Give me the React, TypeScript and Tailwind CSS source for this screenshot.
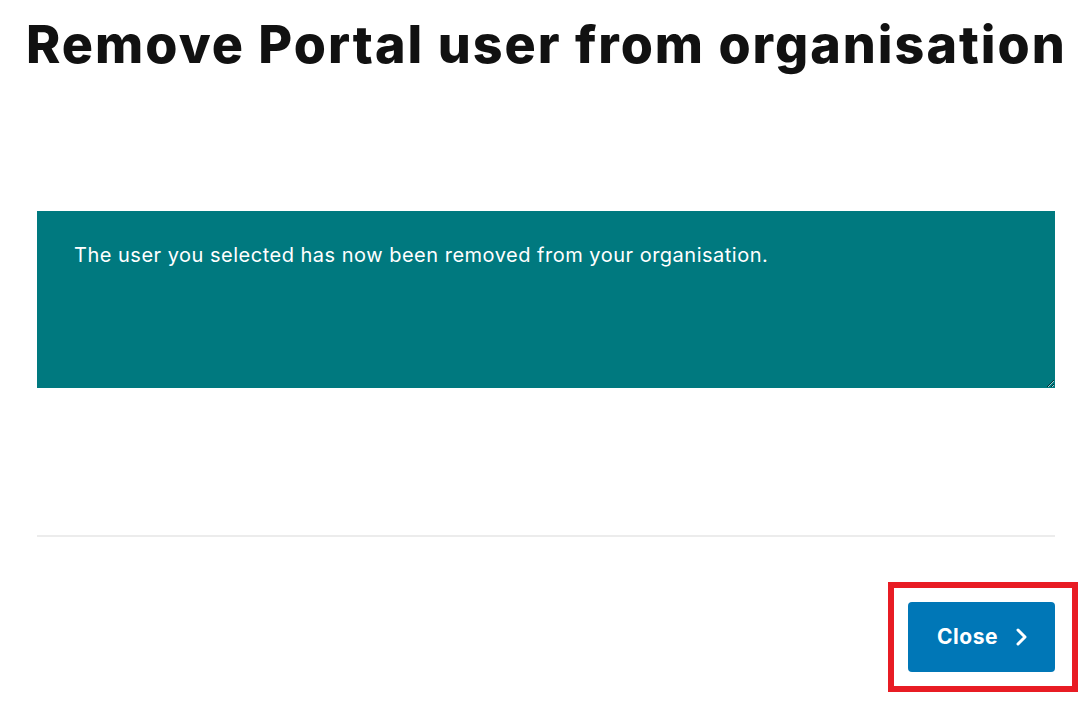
const MESSAGE = 'The user you selected has now been removed from your organisation.'

function Chevron() {
  return (
    <svg width="13" height="18" viewBox="0 0 13 18" fill="none" className="shrink-0">
      <path d="M3 2l7 7-7 7" stroke="currentColor" strokeWidth="3" strokeLinecap="round" strokeLinejoin="round" />
    </svg>
  )
}

export default function App() {
  return (
    <div className="min-h-[704px] w-full bg-white text-[#111111]" style={{ fontFamily: 'Inter, "Noto Sans", sans-serif' }}>
      {/* Page title */}
      <div className="px-[26px] pt-[14px]">
        <h1 className="text-[52px] font-extrabold leading-[62px] tracking-[2px] whitespace-nowrap">
          Remove Portal user from organisation
        </h1>
      </div>

      <div className="px-[37px] pt-[135px]">
        {/* Confirmation message */}
        <textarea
          readOnly
          value={MESSAGE}
          className="block h-[177px] w-full bg-[#00797f] px-[37px] pt-[31px] text-[20px] leading-[26px] tracking-[0.5px] text-white outline-none resize-y"
        />

        <hr className="mt-[147px] border-0 border-t-2 border-[#ececec]" />

        {/* Footer actions */}
        <div className="flex justify-end pt-[65px]">
          <div className="relative">
            <button className="flex h-[70px] w-[147px] items-center justify-center gap-[17px] rounded-[4px] bg-[#0077b7] pl-[2px] text-[21px] font-bold tracking-[0.5px] text-white">
              Close
              <Chevron />
            </button>
            <span className="pointer-events-none absolute -top-[20px] -bottom-[20px] -left-[20px] -right-[23px] border-[6px] border-[#e81c24]" />
          </div>
        </div>
      </div>
    </div>
  )
}
